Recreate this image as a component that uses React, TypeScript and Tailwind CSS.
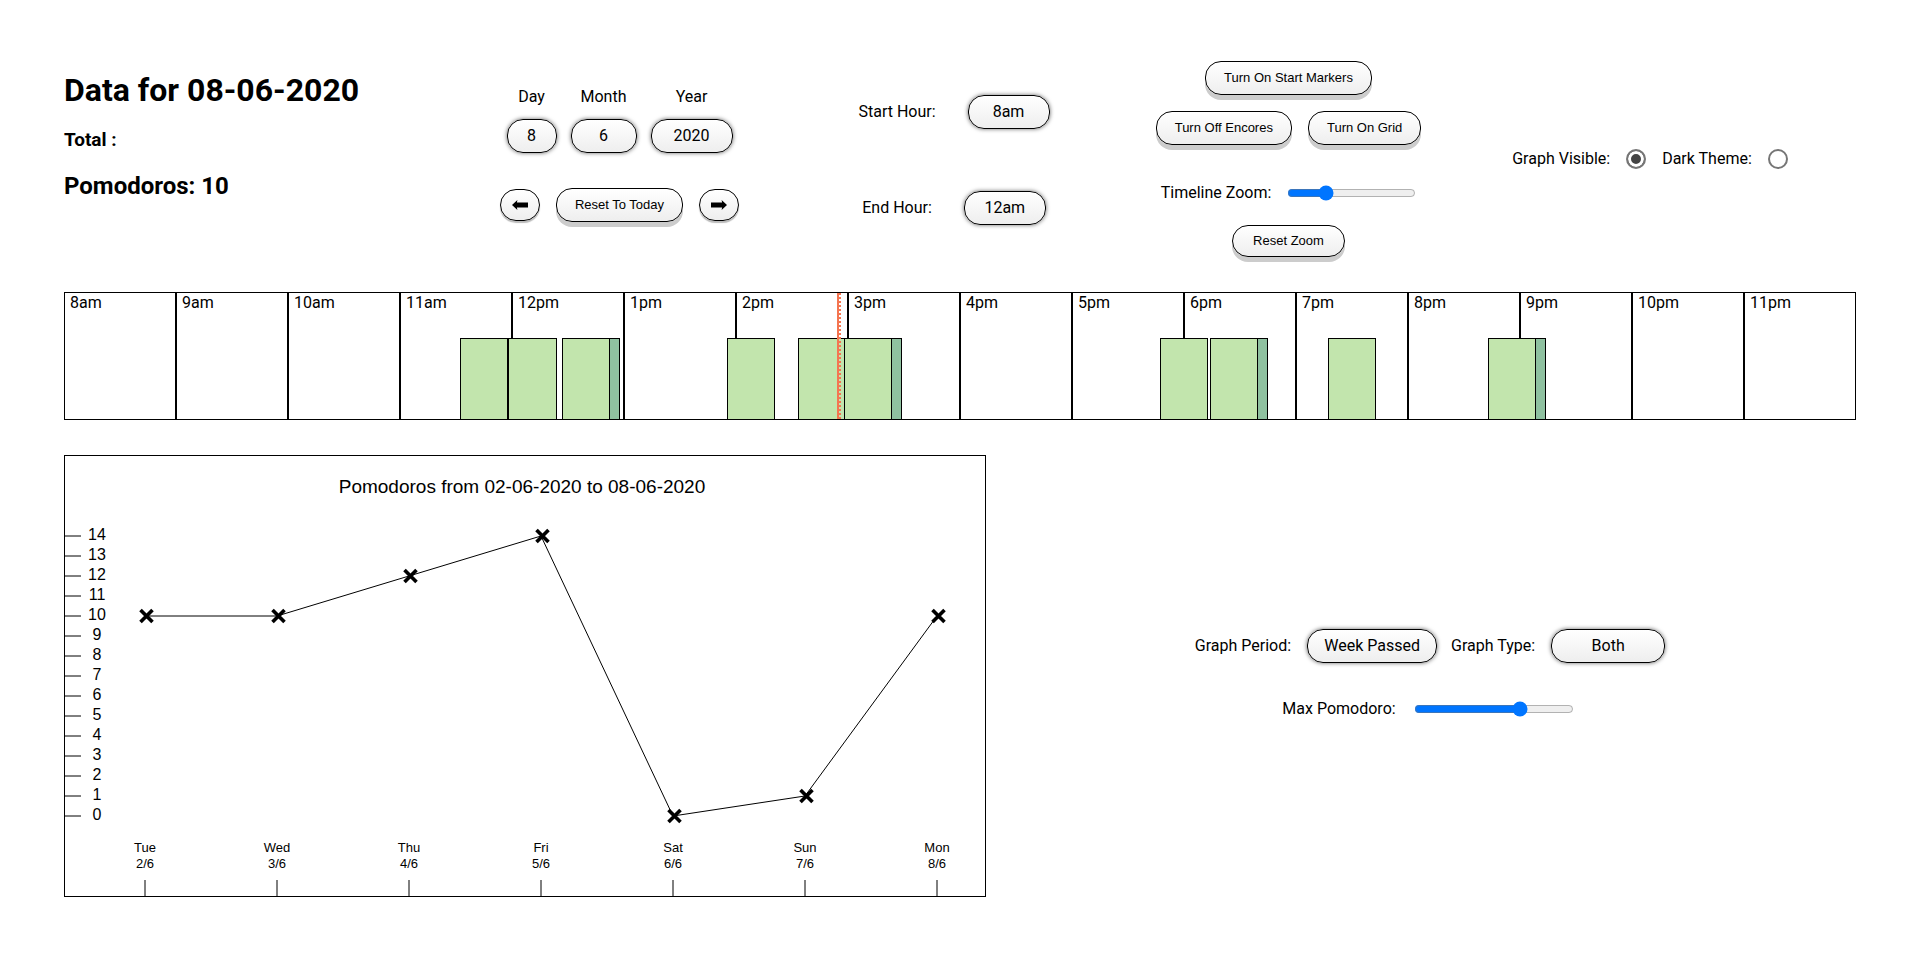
import React from 'react';

const HOURS = [
  '8am', '9am', '10am', '11am', '12pm', '1pm', '2pm', '3pm',
  '4pm', '5pm', '6pm', '7pm', '8pm', '9pm', '10pm', '11pm',
];

const TOTAL_MINUTES = HOURS.length * 60;

// Minutes since the first hour on the timeline.
const SESSIONS: { start: number; encore?: boolean }[] = [
  { start: 212 },
  { start: 238 },
  { start: 267, encore: true },
  { start: 355 },
  { start: 393 },
  { start: 418, encore: true },
  { start: 587 },
  { start: 614, encore: true },
  { start: 677 },
  { start: 763, encore: true },
];

const NOW = 414;

const DAYS = [
  { name: 'Tue', date: '2/6', count: 10 },
  { name: 'Wed', date: '3/6', count: 10 },
  { name: 'Thu', date: '4/6', count: 12 },
  { name: 'Fri', date: '5/6', count: 14 },
  { name: 'Sat', date: '6/6', count: 0 },
  { name: 'Sun', date: '7/6', count: 1 },
  { name: 'Mon', date: '8/6', count: 10 },
];

const percent = (minutes: number) => `${(minutes / TOTAL_MINUTES) * 100}%`;

function PillSelect({ id, value, width }: { id: string; value: string; width: string }) {
  return (
    <select
      id={id}
      defaultValue={value}
      className={`h-[34px] appearance-none rounded-2xl border border-black bg-linear-to-b from-white to-[#eeeeee] text-center text-base text-black shadow-[0_0_4px_rgba(0,0,0,0.6)] ${width}`}
    >
      <option value={value}>{value}</option>
    </select>
  );
}

function PillButton({ children, size = 'h-[34px] px-[18px]' }: { children: React.ReactNode; size?: string }) {
  return (
    <button
      type="button"
      className={`rounded-2xl border border-black bg-linear-to-b from-white to-[#eeeeee] font-['Liberation_Sans',Arial,sans-serif] text-[13px] leading-4 text-black shadow-[0_5px_0_#cccccc] ${size}`}
    >
      {children}
    </button>
  );
}

function ArrowButton({ label, flip }: { label: string; flip?: boolean }) {
  return (
    <button
      type="button"
      aria-label={label}
      className="flex h-8 w-10 items-center justify-center rounded-2xl border border-black bg-linear-to-b from-white to-[#eeeeee] shadow-[0_2px_1px_#bbbbbb]"
    >
      <svg width="16" height="10" viewBox="0 0 16 10" className={flip ? 'rotate-180' : ''}>
        <path d="M0 5 L5.4 0 L4.9 2.6 H16 V7.4 H4.9 L5.4 10 Z" fill="#000" />
      </svg>
    </button>
  );
}

function Toggle({ id, label, on }: { id: string; label: string; on?: boolean }) {
  return (
    <div className="flex items-center gap-4">
      <label htmlFor={id}>{label}</label>
      <input
        id={id}
        name={id}
        type="radio"
        defaultChecked={on}
        className="size-5 appearance-none rounded-full border-2 border-[#767676] bg-white checked:bg-[#444444] checked:shadow-[inset_0_0_0_3px_#ffffff]"
      />
    </div>
  );
}

function DateField({ id, label, value, width }: { id: string; label: string; value: string; width: string }) {
  return (
    <div className="flex flex-col items-center gap-[10px]">
      <label htmlFor={id}>{label}</label>
      <PillSelect id={id} value={value} width={width} />
    </div>
  );
}

function Header() {
  return (
    <header className="grid grid-cols-[388fr_335fr_334fr_335fr_400fr] items-center">
      <div className="flex flex-col gap-4 pb-[46px]">
        <h1 className="text-[32px] leading-10 font-bold">Data for 08-06-2020</h1>
        <h3 className="text-[19px] leading-7 font-bold">Total :</h3>
        <h2 className="text-2xl leading-8 font-bold">Pomodoros: 10</h2>
      </div>

      <div className="flex flex-col items-center gap-[35px] pb-3">
        <div className="flex gap-[14px]">
          <DateField id="day" label="Day" value="8" width="w-[50px]" />
          <DateField id="month" label="Month" value="6" width="w-[66px]" />
          <DateField id="year" label="Year" value="2020" width="w-[82px]" />
        </div>
        <div className="flex items-center gap-4">
          <ArrowButton label="Previous day" />
          <PillButton>Reset To Today</PillButton>
          <ArrowButton label="Next day" flip />
        </div>
      </div>

      <div className="flex flex-col items-center gap-[62px] pt-0.5">
        <div className="flex items-center gap-8">
          <label htmlFor="start-hour">Start Hour:</label>
          <PillSelect id="start-hour" value="8am" width="w-[82px]" />
        </div>
        <div className="flex items-center gap-8">
          <label htmlFor="end-hour">End Hour:</label>
          <PillSelect id="end-hour" value="12am" width="w-[82px]" />
        </div>
      </div>

      <div className="flex flex-col items-center">
        <PillButton>Turn On Start Markers</PillButton>
        <div className="mt-4 flex gap-4">
          <PillButton>Turn Off Encores</PillButton>
          <PillButton>Turn On Grid</PillButton>
        </div>
        <div className="mt-9 flex h-6 items-center gap-4">
          <label htmlFor="timeline-zoom">Timeline Zoom:</label>
          <input id="timeline-zoom" type="range" min="0" max="100" defaultValue="27" className="w-[129px]" />
        </div>
        <div className="mt-5">
          <PillButton size="h-8 px-5">Reset Zoom</PillButton>
        </div>
      </div>

      <div className="flex items-center justify-center gap-4 pr-3">
        <Toggle id="graph-visible" label="Graph Visible:" on />
        <Toggle id="dark-theme" label="Dark Theme:" />
      </div>
    </header>
  );
}

function Timeline() {
  return (
    <section className="relative mt-[35px] flex h-32">
      {HOURS.map((hour) => (
        <div key={hour} className="flex-1 border border-black pl-[5px] leading-[19px]">
          {hour}
        </div>
      ))}
      {SESSIONS.map(({ start, encore }) => (
        <React.Fragment key={start}>
          <div
            className="absolute bottom-0 box-content h-20 border border-black bg-[#c2e5ad]"
            style={{ left: percent(start), width: percent(25) }}
          />
          {encore && (
            <div
              className="absolute bottom-0 box-content h-20 border border-black bg-[#8fc1a0]"
              style={{ left: percent(start + 25), width: percent(5) }}
            />
          )}
        </React.Fragment>
      ))}
      <div
        className="absolute inset-y-px w-1 border-r-2 border-l-2 border-[#f47551] [border-right-style:dotted]"
        style={{ left: percent(NOW) }}
      />
    </section>
  );
}

function Chart() {
  const x = (i: number) => 80 + i * 132;
  const y = (n: number) => 360 - n * 20;
  return (
    <div className="w-[922px] max-w-full border border-black">
      <svg
        viewBox="0 0 920 440"
        className="block w-full font-['Liberation_Sans',Arial,sans-serif]"
        textAnchor="middle"
        role="img"
        aria-label="Pomodoros per day"
      >
        <text x="457" y="37" fontSize="19">Pomodoros from 02-06-2020 to 08-06-2020</text>
        {Array.from({ length: 15 }, (_, n) => (
          <g key={n}>
            <line x1="0" x2="16" y1={y(n)} y2={y(n)} stroke="#000" />
            <text x="32" y={y(n) + 4} fontSize="16">{n}</text>
          </g>
        ))}
        {DAYS.map((day, i) => (
          <g key={day.name}>
            <text x={x(i)} y="396" fontSize="13">{day.name}</text>
            <text x={x(i)} y="412" fontSize="13">{day.date}</text>
            <line x1={x(i)} x2={x(i)} y1="424" y2="440" stroke="#000" />
          </g>
        ))}
        <polyline
          points={DAYS.map((day, i) => `${x(i)},${y(day.count)}`).join(' ')}
          fill="none"
          stroke="#000"
        />
        {DAYS.map((day, i) => (
          <path
            key={day.name}
            d="M-6 -6 L6 6 M6 -6 L-6 6"
            transform={`translate(${x(i) + 1.5} ${y(day.count)})`}
            stroke="#000"
            strokeWidth="3.6"
          />
        ))}
      </svg>
    </div>
  );
}

function GraphControls() {
  return (
    <div className="flex flex-1 flex-col items-center gap-[34px] pb-[3px] pl-[18px]">
      <div className="flex flex-wrap items-center gap-[14px]">
        <div className="flex items-center gap-4">
          <label htmlFor="graph-period">Graph Period:</label>
          <PillSelect id="graph-period" value="Week Passed" width="w-[130px]" />
        </div>
        <div className="flex items-center gap-4">
          <label htmlFor="graph-type">Graph Type:</label>
          <PillSelect id="graph-type" value="Both" width="w-[114px]" />
        </div>
      </div>
      <div className="flex items-center gap-[18px] pr-1">
        <label htmlFor="max-pomodoro">Max Pomodoro:</label>
        <input id="max-pomodoro" type="range" min="0" max="100" defaultValue="68" className="w-40" />
      </div>
    </div>
  );
}

export default function App() {
  return (
    <main className="min-h-screen bg-white px-16 pt-[61px] pb-16 font-[Roboto,sans-serif] text-base text-black">
      <Header />
      <Timeline />
      <section className="mt-[35px] flex items-center">
        <Chart />
        <GraphControls />
      </section>
    </main>
  );
}
